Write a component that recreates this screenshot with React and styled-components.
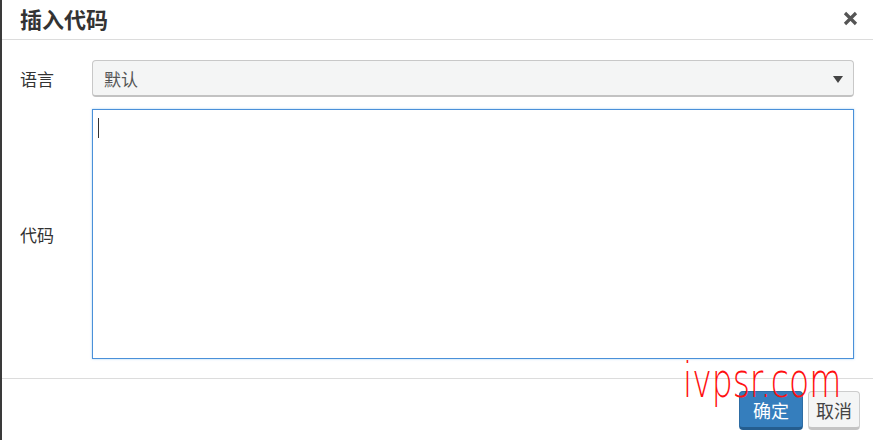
import styled, { createGlobalStyle } from "styled-components";

const GlobalStyle = createGlobalStyle`
  html, body {
    margin: 0;
    padding: 0;
    background: #fff;
  }
  body {
    font-family: "Noto Sans CJK SC", "Liberation Sans", sans-serif;
    color: #333;
  }
`;

const Dialog = styled.div`
  position: relative;
  width: 873px;
  height: 440px;
  box-sizing: border-box;
  border-left: 2px solid #3a3a3a;
  background: #fff;
  overflow: hidden;
`;

const Header = styled.div`
  display: flex;
  align-items: center;
  justify-content: space-between;
  height: 40px;
  box-sizing: border-box;
  padding: 0 14px 3px 18px;
  border-bottom: 1px solid #dcdcdc;
`;

const Title = styled.h4`
  margin: 0;
  font-size: 22px;
  font-weight: 700;
  color: #333;
`;

const Close = styled.button`
  border: 0;
  background: none;
  padding: 0;
  width: 18px;
  height: 18px;
  display: flex;
  align-items: center;
  justify-content: center;
  cursor: pointer;
`;

const Body = styled.div`
  display: flex;
  flex-direction: column;
  gap: 12px;
  padding: 20px 19px 19px 18px;
  border-bottom: 1px solid #dcdcdc;
`;

const Row = styled.div`
  display: flex;
  align-items: center;
`;

const Label = styled.label`
  width: 72px;
  font-size: 17px;
  color: #333;
`;

const Select = styled.div`
  flex: 1;
  height: 37px;
  box-sizing: border-box;
  display: flex;
  align-items: center;
  justify-content: space-between;
  padding: 0 10px 0 11px;
  background: #f4f5f5;
  border: 1px solid #c8c8c8;
  border-bottom: 2px solid #c2c2c2;
  border-radius: 4px;
  font-size: 17px;
  color: #555;
`;

const Caret = styled.span`
  width: 0;
  height: 0;
  border-left: 5px solid transparent;
  border-right: 5px solid transparent;
  border-top: 7px solid #444;
  margin-top: 2px;
`;

const CodeArea = styled.div`
  flex: 1;
  height: 250px;
  box-sizing: border-box;
  border: 1px solid #4a90d9;
  box-shadow: 0 0 2px rgba(102, 175, 233, 0.6);
  padding: 8px 5px;
`;

const TextCursor = styled.div`
  width: 1px;
  height: 20px;
  background: #333;
`;

const Footer = styled.div`
  display: flex;
  justify-content: flex-end;
  gap: 5px;
  padding: 12px 13px 0 0;
`;

const Button = styled.button`
  height: 39px;
  padding: 0 ${(p) => (p.$primary ? "13px" : "7px")};
  font-family: "Noto Sans CJK SC", sans-serif;
  font-size: 18px;
  border-radius: 4px;
  cursor: pointer;
  color: ${(p) => (p.$primary ? "#fff" : "#444")};
  background: ${(p) => (p.$primary ? "#357ebd" : "#f4f5f5")};
  border: 1px solid ${(p) => (p.$primary ? "#2e6da4" : "#cdcdcd")};
  border-bottom: 3px solid ${(p) => (p.$primary ? "#245d8f" : "#c4c4c4")};
`;

const Watermark = styled.div`
  position: absolute;
  left: 681px;
  top: 352px;
  font-family: "DejaVu Sans", sans-serif;
  font-weight: 200;
  font-size: 33px;
  letter-spacing: 0px;
  color: #ff1010;
  transform: scaleY(1.45);
  transform-origin: left top;
  pointer-events: none;
`;

export default function App() {
  return (
    <>
      <GlobalStyle />
      <Dialog>
        <Header>
          <Title>插入代码</Title>
          <Close aria-label="关闭">
            <svg width="15" height="15" viewBox="0 0 15 15">
              <path
                d="M2 2 L13 13 M13 2 L2 13"
                stroke="#555"
                strokeWidth="3.2"
                strokeLinecap="butt"
              />
            </svg>
          </Close>
        </Header>
        <Body>
          <Row>
            <Label>语言</Label>
            <Select>
              <span>默认</span>
              <Caret />
            </Select>
          </Row>
          <Row>
            <Label>代码</Label>
            <CodeArea>
              <TextCursor />
            </CodeArea>
          </Row>
        </Body>
        <Footer>
          <Button $primary>确定</Button>
          <Button>取消</Button>
        </Footer>
        <Watermark>ivpsr.com</Watermark>
      </Dialog>
    </>
  );
}
